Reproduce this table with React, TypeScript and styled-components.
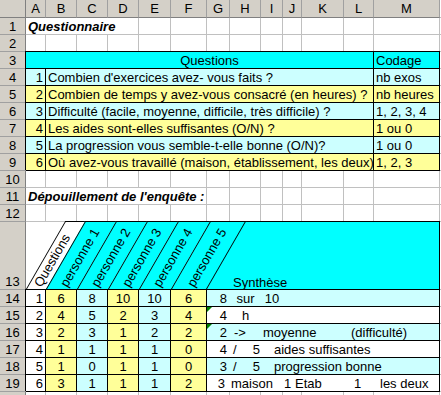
import React from 'react';
import styled, { createGlobalStyle, css } from 'styled-components';

type Tone = 'white' | 'cyan' | 'pale' | 'yellow';
type Align = 'left' | 'center' | 'right';

const TONES: Record<Tone, string> = {
  white: '#ffffff',
  cyan: '#00ffff',
  pale: '#ccffff',
  yellow: '#ffff99',
};

const JUSTIFY: Record<Align, string> = {
  left: 'flex-start',
  center: 'center',
  right: 'flex-end',
};

const SELF: Record<Align, string> = {
  left: 'start',
  center: 'center',
  right: 'end',
};

const COL_WIDTHS = [20, 31, 31, 31, 32, 36, 23, 31, 22, 19, 42, 30, 66];
const LETTERS = 'ABCDEFGHIJKLM'.split('');

const QUESTIONS: [string, string][] = [
  ["Combien d'exercices avez- vous faits ?", 'nb exos'],
  ['Combien de temps y avez-vous consacré (en heures) ?', 'nb heures'],
  ['Difficulté (facile, moyenne, difficile, très difficile) ?', '1, 2, 3, 4'],
  ['Les aides sont-elles suffisantes (O/N) ?', '1 ou 0'],
  ['La progression vous semble-t-elle bonne (O/N)?', '1 ou 0'],
  ['Où avez-vous travaillé (maison, établissement, les deux)', '1, 2, 3'],
];

const ANSWERS = [
  [6, 8, 10, 10, 6],
  [4, 5, 2, 3, 4],
  [2, 3, 1, 2, 2],
  [1, 1, 1, 1, 0],
  [1, 0, 1, 1, 0],
  [3, 1, 1, 1, 2],
];

const ANSWER_TONES: Tone[] = ['yellow', 'pale', 'yellow', 'pale', 'yellow'];

// pieces of text in the synthesis block, columns counted from G (1) to M (7)
type Piece = { col: number; text: string; align: Align; pad: number };

const SYNTHESIS: { tone: Tone; flag?: boolean; pieces: Piece[] }[] = [
  {
    tone: 'pale',
    pieces: [
      { col: 1, text: '8', align: 'right', pad: 3 },
      { col: 2, text: 'sur', align: 'center', pad: 0 },
      { col: 3, text: '10', align: 'center', pad: 0 },
    ],
  },
  {
    tone: 'white',
    flag: true,
    pieces: [
      { col: 1, text: '4', align: 'right', pad: 3 },
      { col: 2, text: 'h', align: 'center', pad: 0 },
    ],
  },
  {
    tone: 'pale',
    flag: true,
    pieces: [
      { col: 1, text: '2', align: 'right', pad: 3 },
      { col: 2, text: '->', align: 'left', pad: 4 },
      { col: 3, text: 'moyenne', align: 'left', pad: 2 },
      { col: 6, text: '(difficulté)', align: 'left', pad: 7 },
    ],
  },
  {
    tone: 'white',
    pieces: [
      { col: 1, text: '4', align: 'right', pad: 3 },
      { col: 2, text: '/', align: 'left', pad: 3 },
      { col: 2, text: '5', align: 'right', pad: 1 },
      { col: 3, text: 'aides suffisantes', align: 'left', pad: 13 },
    ],
  },
  {
    tone: 'pale',
    pieces: [
      { col: 1, text: '3', align: 'right', pad: 3 },
      { col: 2, text: '/', align: 'left', pad: 3 },
      { col: 2, text: '5', align: 'right', pad: 1 },
      { col: 3, text: 'progression bonne', align: 'left', pad: 13 },
    ],
  },
  {
    tone: 'white',
    pieces: [
      { col: 1, text: '3', align: 'right', pad: 5 },
      { col: 2, text: 'maison', align: 'left', pad: 1 },
      { col: 4, text: '1', align: 'left', pad: 1 },
      { col: 4, text: 'Etab', align: 'left', pad: 12 },
      { col: 6, text: '1', align: 'left', pad: 10 },
      { col: 7, text: 'les deux', align: 'left', pad: 6 },
    ],
  },
];

const GlobalStyle = createGlobalStyle`
  *, *::before, *::after { box-sizing: border-box; }
  html, body { margin: 0; padding: 0; background: #fff; overflow: hidden; }
  body {
    font-family: "Liberation Sans", Arial, sans-serif;
    font-size: 13px;
    color: #000;
  }
`;

const Sheet = styled.div`
  display: grid;
  grid-template-columns: 26px ${COL_WIDTHS.map((w) => `${w}px`).join(' ')} 1fr;
  grid-template-rows: 18px repeat(12, 17px) 68px repeat(7, 17px);
  width: 441px;
  height: 395px;
  overflow: hidden;
  background: #fff;
`;

const Corner = styled.div`
  background: #d4d0c8;
  border-right: 1px solid #808080;
  border-bottom: 1px solid #808080;
`;

const ColHead = styled.div`
  display: flex;
  align-items: center;
  justify-content: center;
  background: #d4d0c8;
  border-right: 1px solid #a0a0a0;
  border-bottom: 1px solid #808080;
  line-height: 15px;
`;

const RowHead = styled.div`
  display: flex;
  align-items: flex-end;
  justify-content: center;
  background: #d4d0c8;
  border-right: 1px solid #808080;
  border-bottom: 1px solid #a0a0a0;
  line-height: 15px;
`;

const Filler = styled.div`
  border-bottom: 1px solid #c0c0c0;
`;

const boxed = css`
  border-right: 1px solid #000;
  border-bottom: 1px solid #000;
  box-shadow: -1px -1px 0 #000, 0 -1px 0 #000;
`;

const Cell = styled.div<{ $span?: number; $tone?: Tone; $box?: boolean; $align?: Align; $title?: boolean; $indent?: number }>`
  grid-column: span ${(p) => p.$span ?? 1};
  min-width: 0;
  display: flex;
  align-items: flex-end;
  justify-content: ${(p) => JUSTIFY[p.$align ?? 'left']};
  padding: 0 2px 0 ${(p) => 2 + (p.$indent ?? 0)}px;
  line-height: 15px;
  white-space: nowrap;
  background: ${(p) => (p.$tone ? TONES[p.$tone] : 'transparent')};
  border-right: 1px solid #c0c0c0;
  border-bottom: 1px solid #c0c0c0;
  ${(p) => p.$box && boxed}
  ${(p) =>
    p.$title &&
    css`
      font-weight: bold;
      font-style: italic;
    `}
`;

const SlantCell = styled.div`
  position: relative;
  z-index: 1;
`;

const Slant = styled.div<{ $tone: Tone; $last?: boolean }>`
  position: absolute;
  top: -1px;
  left: 0;
  right: 0;
  bottom: 1px;
  transform: skewX(-30deg);
  transform-origin: 0 100%;
  background: ${(p) => TONES[p.$tone]};
  border-top: 1px solid #000;
  border-left: 1px solid #000;
  ${(p) => p.$last && 'border-right: 1px solid #000;'}
`;

const SlantLabel = styled.span`
  position: absolute;
  left: calc(50% + 7px);
  bottom: 1px;
  line-height: 13px;
  white-space: nowrap;
  transform-origin: 0 100%;
  transform: rotate(-60deg);
`;

const SynthHead = styled.div`
  grid-column: span 7;
  display: flex;
  align-items: flex-end;
  padding-left: 26px;
  line-height: 15px;
  background: ${TONES.cyan};
  border-right: 1px solid #000;
  box-shadow: 0 -1px 0 #000;
`;

const SynthRow = styled.div<{ $tone: Tone; $flag?: boolean }>`
  grid-column: span 7;
  position: relative;
  display: grid;
  grid-template-columns: 23px 31px 22px 19px 42px 30px 66px;
  align-items: end;
  line-height: 15px;
  white-space: nowrap;
  background: ${(p) => TONES[p.$tone]};
  ${boxed}
  ${(p) =>
    p.$flag &&
    css`
      &::before {
        content: '';
        position: absolute;
        top: 0;
        left: 0;
        border-top: 5px solid #008000;
        border-right: 5px solid transparent;
      }
    `}
`;

const SynthText = styled.span<{ $col: number; $align: Align; $pad: number }>`
  grid-row: 1;
  grid-column: ${(p) => p.$col};
  justify-self: ${(p) => SELF[p.$align]};
  padding-left: ${(p) => (p.$align === 'left' ? Math.max(p.$pad, 0) : 0)}px;
  padding-right: ${(p) => (p.$align === 'right' ? p.$pad : 0)}px;
  margin-left: ${(p) => (p.$align === 'left' && p.$pad < 0 ? p.$pad : 0)}px;
`;

const blanks = (n: number, key: string) =>
  Array.from({ length: n }, (_, i) => <Cell key={`${key}-${i}`} />);

const App = () => {
  const rows: React.ReactNode[] = [];

  // row 1, 2
  rows.push(
    <RowHead key="h1">1</RowHead>,
    <Cell key="title" $span={4} $title>
      Questionnaire
    </Cell>,
    ...blanks(9, 'r1'),
    <Filler key="f1" />,
    <RowHead key="h2">2</RowHead>,
    ...blanks(13, 'r2'),
    <Filler key="f2" />,
  );

  // row 3 header
  rows.push(
    <RowHead key="h3">3</RowHead>,
    <Cell key="q" $span={12} $tone="cyan" $box $align="center" $indent={20}>
      Questions
    </Cell>,
    <Cell key="codage" $tone="cyan" $box>
      Codage
    </Cell>,
    <Filler key="f3" />,
  );

  // rows 4 to 9
  QUESTIONS.forEach(([question, code], i) => {
    const tone: Tone = i % 2 === 0 ? 'pale' : 'yellow';
    rows.push(
      <RowHead key={`h${i + 4}`}>{i + 4}</RowHead>,
      <Cell key={`n${i}`} $tone={tone} $box $align="right">
        {i + 1}
      </Cell>,
      <Cell key={`t${i}`} $span={11} $tone={tone} $box>
        {question}
      </Cell>,
      <Cell key={`c${i}`} $tone={tone} $box>
        {code}
      </Cell>,
      <Filler key={`f${i + 4}`} />,
    );
  });

  // rows 10 to 12
  rows.push(
    <RowHead key="h10">10</RowHead>,
    ...blanks(13, 'r10'),
    <Filler key="f10" />,
    <RowHead key="h11">11</RowHead>,
    <Cell key="subtitle" $span={6} $title>
      Dépouillement de l'enquête :
    </Cell>,
    ...blanks(7, 'r11'),
    <Filler key="f11" />,
    <RowHead key="h12">12</RowHead>,
    ...blanks(13, 'r12'),
    <Filler key="f12" />,
  );

  // row 13, slanted headings
  const headings = ['Questions', 'personne 1', 'personne 2', 'personne 3', 'personne 4', 'personne 5'];
  rows.push(
    <RowHead key="h13">13</RowHead>,
    ...headings.map((label, i) => (
      <SlantCell key={`s${i}`}>
        <Slant $tone={i === 0 ? 'white' : 'cyan'} $last={i === headings.length - 1} />
        <SlantLabel>{label}</SlantLabel>
      </SlantCell>
    )),
    <SynthHead key="synth">Synthèse</SynthHead>,
    <Filler key="f13" />,
  );

  // rows 14 to 19
  ANSWERS.forEach((answers, i) => {
    const synth = SYNTHESIS[i];
    rows.push(
      <RowHead key={`h${i + 14}`}>{i + 14}</RowHead>,
      <Cell key={`a${i}`} $tone="white" $box $align="right">
        {i + 1}
      </Cell>,
      ...answers.map((value, j) => (
        <Cell key={`a${i}-${j}`} $tone={ANSWER_TONES[j]} $box $align="center">
          {value}
        </Cell>
      )),
      <SynthRow key={`sy${i}`} $tone={synth.tone} $flag={synth.flag}>
        {synth.pieces.map((piece, k) => (
          <SynthText key={k} $col={piece.col} $align={piece.align} $pad={piece.pad}>
            {piece.text}
          </SynthText>
        ))}
      </SynthRow>,
      <Filler key={`f${i + 14}`} />,
    );
  });

  // row 20 only peeks in at the bottom edge; its number is below the fold
  rows.push(<RowHead key="h20" />, ...blanks(13, 'r20'), <Filler key="f20" />);

  return (
    <>
      <GlobalStyle />
      <Sheet>
        <Corner />
        {LETTERS.map((letter) => (
          <ColHead key={letter}>{letter}</ColHead>
        ))}
        <Filler />
        {rows}
      </Sheet>
    </>
  );
};

export default App;
